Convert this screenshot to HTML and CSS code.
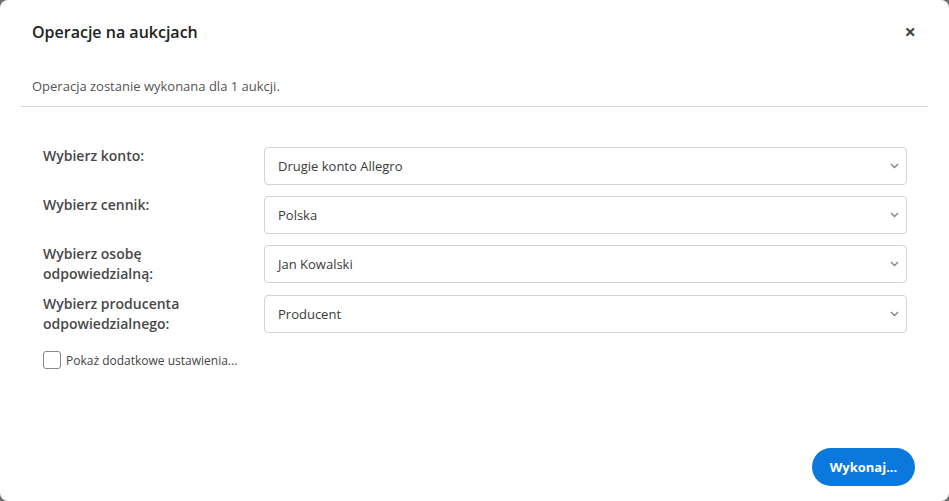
FILE: index.html
```html
<!DOCTYPE html>
<html lang="pl">
<head>
  <meta charset="UTF-8">
  <title>Operacje na aukcjach</title>
  <link rel="stylesheet" href="styles.css">
</head>
<body>

  <div class="modal">
    <!-- Header -->
    <div class="modal-header">
      <h2>Operacje na aukcjach</h2>
      <span class="modal-close">&times;</span>
    </div>

    <div class="modal-info">Operacja zostanie wykonana dla 1 aukcji.</div>

    <!-- Form -->
    <div class="modal-form">
      <div class="form-row">
        <label>Wybierz konto:</label>
        <div class="select">
          <span>Drugie konto Allegro</span>
          <svg width="9" height="6" viewBox="0 0 9 6"><path d="M1 1l3.5 3.5L8 1" fill="none" stroke="#7a828a" stroke-width="1.3"/></svg>
        </div>
      </div>
      <div class="form-row">
        <label>Wybierz cennik:</label>
        <div class="select">
          <span>Polska</span>
          <svg width="9" height="6" viewBox="0 0 9 6"><path d="M1 1l3.5 3.5L8 1" fill="none" stroke="#7a828a" stroke-width="1.3"/></svg>
        </div>
      </div>
      <div class="form-row">
        <label>Wybierz osobę odpowiedzialną:</label>
        <div class="select">
          <span>Jan Kowalski</span>
          <svg width="9" height="6" viewBox="0 0 9 6"><path d="M1 1l3.5 3.5L8 1" fill="none" stroke="#7a828a" stroke-width="1.3"/></svg>
        </div>
      </div>
      <div class="form-row">
        <label>Wybierz producenta odpowiedzialnego:</label>
        <div class="select">
          <span>Producent</span>
          <svg width="9" height="6" viewBox="0 0 9 6"><path d="M1 1l3.5 3.5L8 1" fill="none" stroke="#7a828a" stroke-width="1.3"/></svg>
        </div>
      </div>

      <div class="check-row">
        <span class="checkbox"></span>
        <span>Pokaż dodatkowe ustawienia...</span>
      </div>
    </div>

    <div class="modal-footer">
      <button class="btn-primary">Wykonaj...</button>
    </div>
  </div>

</body>
</html>
```

FILE: styles.css
```css
body {
  margin: 0;
  font-family: 'Open Sans', sans-serif;
  background-color: #6e6e6e;
  color: #333;
}

.modal {
  box-sizing: border-box;
  width: 100vw;
  height: 100vh;
  background: #fff;
  border-radius: 8px;
  display: flex;
  flex-direction: column;
}

.modal-header {
  display: flex;
  align-items: center;
  justify-content: space-between;
  padding: 19px 33px 0 32px;
  height: 26px;
}

.modal-header h2 {
  margin: 0;
  font-size: 16px;
  font-weight: 600;
  color: #222;
}

.modal-close {
  font-size: 20px;
  font-weight: 700;
  color: #444;
  line-height: 1;
}

.modal-info {
  margin: 32px 21px 0;
  padding: 0 11px 11px;
  font-size: 13px;
  color: #555;
  border-bottom: 1px solid #d3d6de;
}

.modal-form {
  padding: 40px 42px 0 43px;
  display: flex;
  flex-direction: column;
  gap: 11px;
}

.form-row {
  display: flex;
  align-items: flex-start;
}

.form-row label {
  width: 191px;
  padding-right: 30px;
  flex-shrink: 0;
  font-size: 14px;
  font-weight: 600;
  line-height: 20px;
  color: #484848;
  margin-top: -1px;
}

.select {
  flex: 1;
  height: 38px;
  box-sizing: border-box;
  border: 1px solid #ced4da;
  border-radius: 4px;
  padding: 0 7px 0 13px;
  display: flex;
  align-items: center;
  justify-content: space-between;
  font-size: 13px;
  color: #3a3a3a;
}

.check-row {
  display: flex;
  align-items: center;
  gap: 5px;
  font-size: 12px;
  color: #444;
  margin-top: 6px;
}

.checkbox {
  width: 16px;
  height: 16px;
  border: 1px solid #888;
  border-radius: 3px;
}

.modal-footer {
  margin-top: auto;
  display: flex;
  justify-content: flex-end;
  padding: 0 34px 15px;
}

.btn-primary {
  height: 38px;
  width: 103px;
  border: none;
  border-radius: 19px;
  background-color: #0b78dd;
  color: #fff;
  font-family: 'Open Sans', sans-serif;
  font-size: 13px;
  font-weight: 700;
}
```
